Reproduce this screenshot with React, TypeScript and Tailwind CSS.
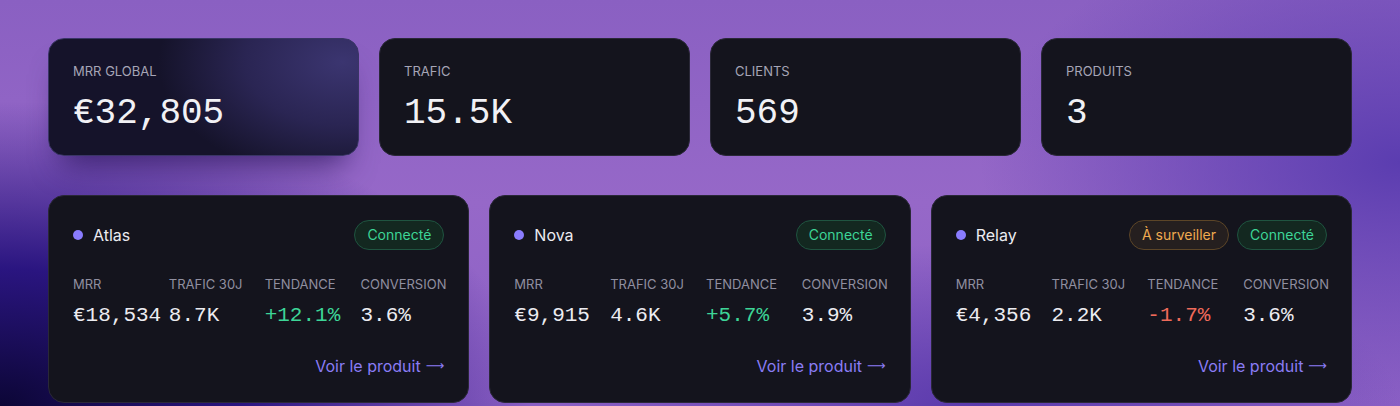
import React from 'react';

type Product = {
  name: string;
  mrr: string;
  traffic: string;
  trend: string;
  conversion: string;
  watch?: boolean;
};

const stats = [
  { label: 'MRR Global', value: '€32,805', highlight: true },
  { label: 'Trafic', value: '15.5K' },
  { label: 'Clients', value: '569' },
  { label: 'Produits', value: '3' },
];

const products: Product[] = [
  { name: 'Atlas', mrr: '€18,534', traffic: '8.7K', trend: '+12.1%', conversion: '3.6%' },
  { name: 'Nova', mrr: '€9,915', traffic: '4.6K', trend: '+5.7%', conversion: '3.9%' },
  { name: 'Relay', mrr: '€4,356', traffic: '2.2K', trend: '-1.7%', conversion: '3.6%', watch: true },
];

const sans = "font-['Inter','Noto_Sans',sans-serif]";
const mono = "font-['Liberation_Mono','DejaVu_Sans_Mono',monospace]";

const StatCard = ({ label, value, highlight }: { label: string; value: string; highlight?: boolean }) => (
  <div
    className={
      highlight
        ? 'rounded-2xl border border-[#3a3566] bg-[radial-gradient(ellipse_70%_120%_at_95%_20%,#3b3570_0%,#2a2553_45%,#15132a_85%)] px-6 pt-6 pb-[21px] shadow-[0_22px_30px_-14px_rgba(40,20,90,0.75)]'
        : 'rounded-2xl border border-[#2a2838] bg-[#14141d] px-6 pt-6 pb-[21px]'
    }
  >
    <div className="text-[13px] leading-4 uppercase text-[#a6a5b6]">{label}</div>
    <div className={`${mono} mt-[15px] text-4xl leading-10 text-[#f1f1f5]`}>{value}</div>
  </div>
);

const Metric = ({ label, value, tone }: { label: string; value: string; tone?: string }) => (
  <div className="min-w-0">
    <div className="text-[13px] leading-4 uppercase text-[#908fa0]">{label}</div>
    <div className={`${mono} mt-2 whitespace-nowrap text-[21px] leading-8 ${tone ?? 'text-[#ececf1]'}`}>{value}</div>
  </div>
);

const ProductCard = ({ product }: { product: Product }) => {
  const negative = product.trend.startsWith('-');
  return (
    <div className="rounded-2xl border border-[#2a2838] bg-[#14141d] px-6 pt-6 pb-6">
      <div className="flex items-center justify-between">
        <div className="flex items-center gap-2.5">
          <span className="size-2.5 rounded-full bg-[#8a7cff]" />
          <span className="text-base text-[#ececf1]">{product.name}</span>
        </div>
        <div className="flex items-center gap-2">
          {product.watch && (
            <span className="rounded-full border border-[#5c4527] bg-[#251f1f] px-3 py-1 text-sm leading-5 text-[#efaa4f]">
              À surveiller
            </span>
          )}
          <span className="rounded-full border border-[#1f5440] bg-[#132820] px-3 py-1 text-sm leading-5 text-[#3dd597]">
            Connecté
          </span>
        </div>
      </div>

      <div className="mt-[26px] grid grid-cols-4 gap-3">
        <Metric label="MRR" value={product.mrr} />
        <Metric label="Trafic 30J" value={product.traffic} />
        <Metric label="Tendance" value={product.trend} tone={negative ? 'text-[#ef6a5a]' : 'text-[#3dd597]'} />
        <Metric label="Conversion" value={product.conversion} />
      </div>

      <div className="mt-[22px] flex justify-end">
        <a className="flex items-center gap-[5px] text-base leading-6 text-[#8a7cf5]">
          Voir le produit
          <span className="font-['DejaVu_Sans',sans-serif] text-[13px]">⟶</span>
        </a>
      </div>
    </div>
  );
};

export default function App() {
  return (
    <div
      className={`${sans} h-[406px] overflow-hidden bg-[radial-gradient(ellipse_38%_75%_at_0%_100%,#0c0636_0%,#2a1580_45%,transparent_100%),radial-gradient(ellipse_30%_60%_at_100%_40%,#5b3db0_0%,transparent_100%),radial-gradient(ellipse_30%_40%_at_70%_100%,#5a3aac_0%,transparent_100%),linear-gradient(180deg,#8a60c2_0%,#9668c8_50%,#8a5fc4_100%)] px-12 pt-[38px]`}
    >
      <div className="grid grid-cols-4 gap-5">
        {stats.map((s) => (
          <StatCard key={s.label} label={s.label} value={s.value} highlight={s.highlight} />
        ))}
      </div>
      <div className="mt-[39px] grid grid-cols-3 gap-5">
        {products.map((p) => (
          <ProductCard key={p.name} product={p} />
        ))}
      </div>
    </div>
  );
}
